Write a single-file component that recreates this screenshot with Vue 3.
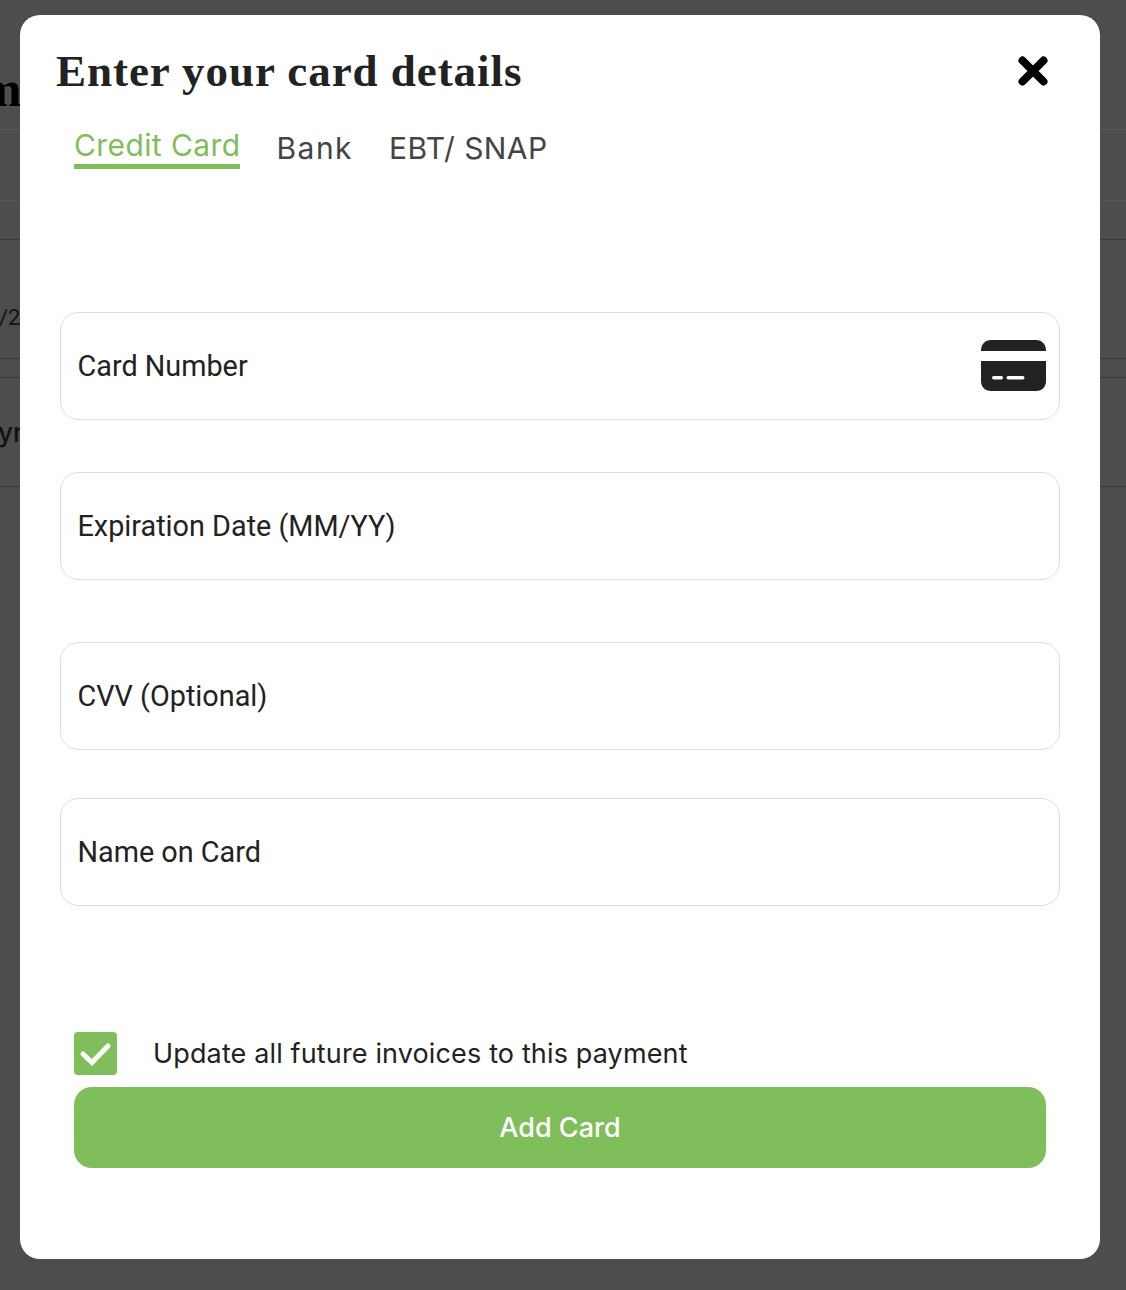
<script setup>
const tabs = [
  { label: 'Credit Card', active: true },
  { label: 'Bank', active: false },
  { label: 'EBT/ SNAP', active: false },
]
const fields = [
  { label: 'Card Number', cls: 'f1', card: true },
  { label: 'Expiration Date (MM/YY)', cls: 'f2', card: false },
  { label: 'CVV (Optional)', cls: 'f3', card: false },
  { label: 'Name on Card', cls: 'f4', card: false },
]
</script>

<template>
  <div class="page">
    <div class="bg">
      <div class="bg-head"><span class="bg-title">m</span></div>
      <div class="bg-row r1"></div>
      <div class="bg-row r2"></div>
      <div class="bg-row r3"><span class="bg-date">/2</span></div>
      <div class="bg-row r4"></div>
      <div class="bg-row r5"><span class="bg-pay">yr</span></div>
    </div>
    <div class="modal">
      <div class="head">
        <h2 class="title">Enter your card details</h2>
        <svg class="close" viewBox="0 0 30 30" aria-label="Close">
          <path d="M4.500 4.500 25.500 25.500M25.500 4.500 4.500 25.500" stroke="#000" stroke-width="8" stroke-linecap="round" fill="none" />
        </svg>
      </div>
      <div class="tabs">
        <div v-for="t in tabs" :key="t.label" class="tab" :class="{ active: t.active }">{{ t.label }}</div>
      </div>
      <div v-for="f in fields" :key="f.label" class="field" :class="f.cls">
        <span>{{ f.label }}</span>
        <svg v-if="f.card" class="card" viewBox="0 0 65 51">
          <path d="M0 11C0 4 4 0 10 0H55C61 0 65 4 65 11V11H0Z" fill="#222" />
          <path d="M0 21H65V41C65 47 61 51 55 51H10C4 51 0 47 0 41Z" fill="#222" />
          <rect x="11" y="36" width="11" height="3.4" rx="1.7" fill="#fff" />
          <rect x="25.500" y="36" width="18" height="3.4" rx="1.7" fill="#fff" />
        </svg>
      </div>
      <div class="check-row">
        <span class="box">
          <svg viewBox="0 0 43 43">
            <path d="M9 22 18 30.500 34 14" stroke="#fff" stroke-width="5" stroke-linecap="round" stroke-linejoin="miter" fill="none" />
          </svg>
        </span>
        <span class="check-label">Update all future invoices to this payment</span>
      </div>
      <button class="submit">Add Card</button>
    </div>
  </div>
</template>

<style>
html, body { margin: 0; background: #4d4d4d; }
</style>

<style scoped>
.page {
  position: relative;
  width: 1126px;
  height: 1290px;
  overflow: hidden;
  background: #4d4d4d;
}
.bg { color: #0a0a0a; }
.bg-head { height: 129px; border-bottom: 1px solid #5a5a5a; position: relative; }
.bg-title {
  position: absolute;
  left: -20px;
  top: 60px;
  font: 700 50px "Liberation Serif", serif;
  color: #000;
}
.bg-row { position: relative; box-sizing: border-box; }
.r1 { height: 71px; border-bottom: 1px solid #5a5a5a; }
.r2 { height: 39px; border-bottom: 1px solid #3a3a3a; }
.r3 { height: 119px; border-bottom: 1px solid #3a3a3a; }
.r4 { height: 19px; border-bottom: 1px solid #3a3a3a; }
.r5 { height: 109px; border-bottom: 1px solid #3a3a3a; }
.bg-date {
  position: absolute;
  left: -1px;
  top: 65px;
  font: 400 22px Roboto, sans-serif;
  color: #111;
}
.bg-pay {
  position: absolute;
  left: -2px;
  top: 39px;
  font: 500 26px Inter, sans-serif;
  color: #111;
}
.modal {
  position: absolute;
  left: 20px;
  top: 15px;
  width: 1080px;
  height: 1244px;
  box-sizing: border-box;
  background: #fff;
  border-radius: 20px;
  padding: 0 40px;
}
.head {
  display: flex;
  justify-content: space-between;
  align-items: center;
  height: 112px;
  margin: 0 0 0 -4px;
}
.title {
  margin: -1px 0 0;
  font: 700 45px/56px "Liberation Serif", serif;
  letter-spacing: 0.95px;
  color: #222;
}
.close {
  width: 30px;
  height: 30px;
  margin-right: 12px;
}
.tabs {
  display: flex;
  align-items: flex-start;
  gap: 36px;
  margin: -1px 0 0 14px;
  height: 186px;
}
.tab {
  font: 400 30px/35px Inter, sans-serif;
  letter-spacing: 0.4px;
  color: #444;
  padding-top: 5px;
}
.tab:nth-child(2) { letter-spacing: 1.5px; }
.tab.active {
  color: #80bd5b;
  padding: 2px 0 1px;
  border-bottom: 5px solid #80bd5b;
}
.field {
  display: flex;
  align-items: center;
  justify-content: space-between;
  box-sizing: border-box;
  height: 108px;
  border: 1px solid #dfdfdf;
  border-radius: 18px;
  padding: 0 13px 0 16.5px;
  font: 400 28.8px Roboto, sans-serif;
  color: #222;
}
.f2 { margin-top: 52px; }
.f3 { margin-top: 62px; }
.f4 { margin-top: 48px; }
.card { width: 65px; height: 51px; margin-bottom: 2px; }
.check-row {
  display: flex;
  align-items: center;
  margin: 126px 0 0 14px;
  height: 43px;
}
.box {
  width: 43px;
  height: 43px;
  background: #80bd5b;
  border-radius: 4px;
  display: block;
}
.box svg { display: block; width: 43px; height: 43px; }
.check-label {
  margin-left: 36px;
  font: 400 27px Inter, sans-serif;
  letter-spacing: 0.14px;
  color: #222;
}
.submit {
  display: block;
  box-sizing: border-box;
  width: 972px;
  height: 81px;
  margin: 12px 0 0 14px;
  border: 0;
  border-radius: 18px;
  background: #80bd5b;
  color: #fff;
  font: 500 27px Inter, sans-serif;
  padding-bottom: 2px;
}
</style>
